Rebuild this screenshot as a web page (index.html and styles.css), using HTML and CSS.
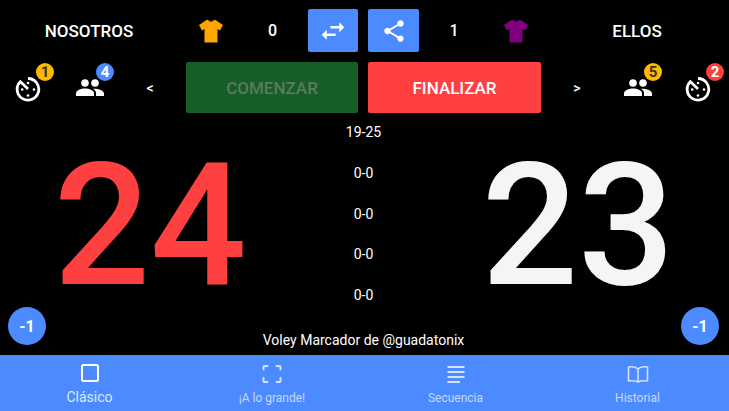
FILE: index.html
```html
<!DOCTYPE html>
<html>
    <head>
        <title>Voley Marcador</title>
        <link rel="stylesheet" href="styles.css">
    </head>
    <body>
        <div class="app">
            <div class="teams">
                <span class="team-name">NOSOTROS</span>
                <span class="shirt-cell">
                    <svg class="shirt" viewBox="0 0 26 24"><path fill="#ffa500" d="M8.500 1 L10 1 Q13 4 16 1 L17.500 1 L25 6 L22 11.500 L19.500 10 L19.500 23.500 L6.500 23.500 L6.500 10 L4 11.500 L1 6 Z"/><path fill="#5a3a00" d="M10 1 Q13 4 16 1 Q13 2.200 10 1 Z"/></svg>
                </span>
                <span class="sets-won">0</span>
                <button class="icon-btn swap">
                    <svg viewBox="0 0 24 24" width="30" height="30"><path fill="#fff" d="M6.990 11 3 15l3.990 4v-3H14v-2H6.990v-3zM21 9l-3.990-4v3H10v2h7.010v3L21 9z"/></svg>
                </button>
                <button class="icon-btn share">
                    <svg viewBox="0 0 24 24" width="26" height="26"><path fill="#fff" d="M18 16.080c-.760 0-1.440.300-1.960.770L8.910 12.700c.050-.230.090-.460.090-.700s-.040-.470-.090-.700l7.050-4.110c.540.500 1.250.810 2.040.810 1.660 0 3-1.340 3-3s-1.340-3-3-3-3 1.340-3 3c0 .240.040.470.090.700L8.040 9.810C7.500 9.310 6.790 9 6 9c-1.660 0-3 1.340-3 3s1.340 3 3 3c.790 0 1.500-.310 2.040-.810l7.120 4.160c-.050.210-.080.430-.080.650 0 1.610 1.310 2.920 2.920 2.920s2.920-1.310 2.920-2.920-1.310-2.920-2.920-2.920z"/></svg>
                </button>
                <span class="sets-won">1</span>
                <span class="shirt-cell">
                    <svg class="shirt" viewBox="0 0 26 24"><path fill="#800080" d="M8.500 1 L10 1 Q13 4 16 1 L17.500 1 L25 6 L22 11.500 L19.500 10 L19.500 23.500 L6.500 23.500 L6.500 10 L4 11.500 L1 6 Z"/><path fill="#300030" d="M10 1 Q13 4 16 1 Q13 2.200 10 1 Z"/></svg>
                </span>
                <span class="team-name">ELLOS</span>
            </div>

            <div class="controls">
                <span class="tool timer">
                    <svg viewBox="0 0 26 26" width="26" height="26"><path fill="none" stroke="#fff" stroke-width="2.800" d="M13 2.500 A10.800 10.800 0 1 1 5.400 5.600 L13 13"/><circle cx="13" cy="7" r="1.300" fill="#fff"/><circle cx="7.200" cy="13.500" r="1.300" fill="#fff"/><circle cx="19" cy="13.500" r="1.300" fill="#fff"/><circle cx="13" cy="19.500" r="1.300" fill="#fff"/></svg>
                    <span class="badge yellow">1</span>
                </span>
                <span class="tool people">
                    <svg viewBox="0 0 28 20" width="28" height="20"><circle cx="9" cy="5" r="3.800" fill="#fff"/><circle cx="19" cy="5" r="3.800" fill="#fff"/><path fill="#fff" d="M0 18 L0 15.500 C0 12 5 10.500 9 10.500 C13 10.500 18 12 18 15.500 L18 18 Z"/><path fill="#fff" d="M17 10.800 C22 10.500 28 12.500 28 15.500 L28 18 L20 18 L20 15 C20 13.500 19 12 17 10.800 Z"/></svg>
                    <span class="badge blue">4</span>
                </span>
                <span class="arrow left">&lt;</span>
                <button class="action start">COMENZAR</button>
                <button class="action finish">FINALIZAR</button>
                <span class="arrow right-arrow">&gt;</span>
                <span class="tool people">
                    <svg viewBox="0 0 28 20" width="28" height="20"><circle cx="9" cy="5" r="3.800" fill="#fff"/><circle cx="19" cy="5" r="3.800" fill="#fff"/><path fill="#fff" d="M0 18 L0 15.500 C0 12 5 10.500 9 10.500 C13 10.500 18 12 18 15.500 L18 18 Z"/><path fill="#fff" d="M17 10.800 C22 10.500 28 12.500 28 15.500 L28 18 L20 18 L20 15 C20 13.500 19 12 17 10.800 Z"/></svg>
                    <span class="badge yellow">5</span>
                </span>
                <span class="tool timer end">
                    <svg viewBox="0 0 26 26" width="26" height="26"><path fill="none" stroke="#fff" stroke-width="2.800" d="M13 2.500 A10.800 10.800 0 1 1 5.400 5.600 L13 13"/><circle cx="13" cy="7" r="1.300" fill="#fff"/><circle cx="7.200" cy="13.500" r="1.300" fill="#fff"/><circle cx="19" cy="13.500" r="1.300" fill="#fff"/><circle cx="13" cy="19.500" r="1.300" fill="#fff"/></svg>
                    <span class="badge red">2</span>
                </span>
            </div>

            <div class="board">
                <div class="side">
                    <div class="points home">24</div>
                    <button class="minus">-1</button>
                </div>
                <div class="center">
                    <div class="sets">
                        <span>19-25</span>
                        <span>0-0</span>
                        <span>0-0</span>
                        <span>0-0</span>
                        <span>0-0</span>
                    </div>
                    <div class="credit">Voley Marcador de @guadatonix</div>
                </div>
                <div class="side right">
                    <div class="points away">23</div>
                    <button class="minus">-1</button>
                </div>
            </div>

            <nav class="tabs">
                <a class="tab active">
                    <svg viewBox="0 0 24 24" width="24" height="24"><rect x="4" y="4" width="16" height="16" rx="1.500" fill="none" stroke="#fff" stroke-width="2"/></svg>
                    <span>Clásico</span>
                </a>
                <a class="tab">
                    <svg viewBox="0 0 24 24" width="24" height="24"><path fill="none" stroke="#fff" stroke-width="2" stroke-linecap="round" d="M3.500 7.500 V5 Q3.500 4 4.500 4 H7.500 M16.500 4 H19.500 Q20.500 4 20.500 5 V7.500 M20.500 16 V19 Q20.500 20 19.500 20 H16.500 M7.500 20 H4.500 Q3.500 20 3.500 19 V16"/></svg>
                    <span>¡A lo grande!</span>
                </a>
                <a class="tab">
                    <svg viewBox="0 0 24 24" width="24" height="24"><path fill="none" stroke="#fff" stroke-width="2" d="M3.500 5 H20.500 M3.500 10 H20.500 M3.500 15 H20.500 M3.500 20 H16"/></svg>
                    <span>Secuencia</span>
                </a>
                <a class="tab">
                    <svg viewBox="0 0 24 24" width="24" height="24"><path fill="none" stroke="#fff" stroke-width="1.600" stroke-linejoin="round" d="M12 7 C10 5 6 4.500 2.500 5 V19 C6 18.500 10 19 12 20 C14 19 18 18.500 21.500 19 V5 C18 4.500 14 5 12 7 Z M12 7 V20"/></svg>
                    <span>Historial</span>
                </a>
            </nav>
        </div>
    </body>
</html>
```

FILE: styles.css
```css
* {
    box-sizing: border-box;
}
html, body {
    margin: 0;
    height: 100%;
    background: #000;
}
body {
    font-family: Roboto, "Liberation Sans", sans-serif;
    color: #fff;
}
button {
    border: 0;
    font-family: inherit;
    color: inherit;
}
.app {
    display: flex;
    flex-direction: column;
    width: 729px;
    height: 411px;
    overflow: hidden;
}
.teams {
    display: grid;
    grid-template-columns: 178px 65px 59px 56px 67px 58px 66px 176px;
    height: 43px;
    margin-top: 9px;
    align-items: center;
    text-align: center;
}
.team-name {
    font-size: 17px;
    font-weight: 500;
}
.shirt-cell {
    display: flex;
    justify-content: center;
}
.shirt {
    width: 26px;
    height: 24px;
}
.sets-won {
    font-size: 16px;
    font-weight: 500;
}
.icon-btn {
    display: flex;
    align-items: center;
    justify-content: center;
    height: 43px;
    padding: 0;
    background: #4c8bff;
    border-radius: 2px;
}
.swap {
    width: 50px;
    justify-self: end;
}
.share {
    width: 51px;
    margin-left: 10px;
}
.controls {
    display: flex;
    align-items: center;
    height: 51px;
    margin-top: 10px;
}
.tool {
    position: relative;
    flex: none;
    display: flex;
    align-items: center;
    justify-content: center;
    width: 60px;
    height: 30px;
}
.timer svg {
    margin-top: 2px;
    margin-left: -4px;
}
.timer.end {
    margin-left: 2px;
}
.badge {
    position: absolute;
    top: -10px;
    left: 36px;
    width: 18px;
    height: 18px;
    border-radius: 50%;
    font-size: 15px;
    font-weight: 700;
    line-height: 18px;
    text-align: center;
}
.yellow {
    background: #ffb900;
    color: #333;
}
.blue {
    background: #4c8bff;
}
.red {
    background: #ff4040;
}
.arrow {
    flex: none;
    text-align: center;
    font-size: 14px;
    font-weight: 500;
}
.arrow.left {
    width: 66px;
    padding-right: 6px;
}
.arrow.right-arrow {
    width: 67px;
    padding-left: 5px;
}
.action {
    flex: none;
    height: 51px;
    font-size: 17px;
    font-weight: 500;
    border-radius: 2px;
}
.start {
    width: 172px;
    margin-right: 10px;
    background: #175d28;
    color: #5b7a60;
}
.finish {
    width: 173px;
    background: #ff4040;
}
.board {
    flex: 1;
    display: grid;
    grid-template-columns: 300px 127px 302px;
    min-height: 0;
}
.side {
    position: relative;
    text-align: center;
}
.points {
    height: 190px;
    margin-top: 18px;
    font-size: 170px;
    font-weight: 500;
    line-height: 190px;
}
.home {
    color: #ff4040;
}
.away {
    color: #f5f5f5;
}
.minus {
    position: absolute;
    left: 8px;
    bottom: 10px;
    width: 38px;
    height: 38px;
    border-radius: 50%;
    padding: 0;
    background: #4c8bff;
    font-size: 16px;
    font-weight: 700;
}
.right .minus {
    left: auto;
    right: 10px;
}
.center {
    display: flex;
    flex-direction: column;
    align-items: center;
    font-size: 14px;
}
.sets {
    display: flex;
    flex-direction: column;
    align-items: center;
    gap: 24.750px;
    margin-top: 11px;
}
.sets span {
    line-height: 16px;
}
.credit {
    margin-top: 29px;
    white-space: nowrap;
    line-height: 16px;
}
.tabs {
    flex: none;
    display: grid;
    grid-template-columns: 179px 186px 181px 183px;
    height: 56px;
    background: #4c8bff;
}
.tab {
    display: flex;
    flex-direction: column;
    align-items: center;
    padding-top: 7px;
    color: #c3d8ff;
    font-size: 12px;
}
.tab svg {
    opacity: 0.75;
}
.tab span {
    margin-top: 4px;
    line-height: 16px;
}
.tab.active {
    padding-top: 6px;
    font-size: 14px;
    color: #dbe7ff;
}
.tab.active svg {
    opacity: 1;
}
```
